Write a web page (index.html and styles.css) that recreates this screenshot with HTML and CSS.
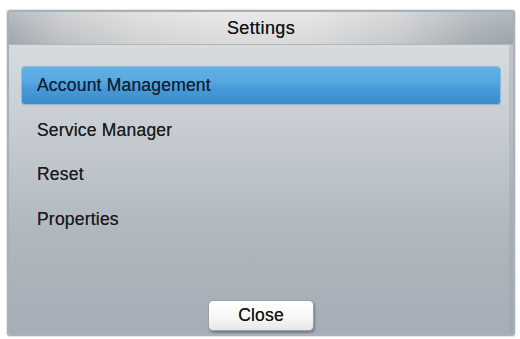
FILE: index.html
```html
<!DOCTYPE html>
<html>
<head>
<meta charset="utf-8">
<link rel="stylesheet" href="styles.css">
</head>
<body>
<div class="dialog">
  <div class="header">Settings</div>
  <div class="content">
    <ul class="menu">
      <li class="item selected">Account Management</li>
      <li class="item">Service Manager</li>
      <li class="item">Reset</li>
      <li class="item">Properties</li>
    </ul>
    <div class="footer">
      <button class="close-btn">Close</button>
    </div>
  </div>
</div>
</body>
</html>
```

FILE: styles.css
```css
html, body {
  margin: 0;
  padding: 0;
  background: #ffffff;
}
body {
  font-family: "Liberation Sans", Arial, sans-serif;
  width: 520px;
  height: 339px;
  overflow: hidden;
}
.dialog {
  margin: 10px 0 0 7px;
  width: 508px;
  height: 326px;
  box-sizing: border-box;
  border: 2px solid #a9b0b6;
  border-radius: 3px;
  box-shadow: 0 0 0 1px #e4e7e9;
  display: flex;
  flex-direction: column;
  overflow: hidden;
  background: linear-gradient(to bottom, #dde1e4 0%, #c7cdd2 35%, #afb6be 70%, #a5adb6 100%);
}
.header {
  height: 32px;
  flex: none;
  display: flex;
  align-items: center;
  justify-content: center;
  font-size: 18px;
  letter-spacing: 0.4px;
  color: #151515;
  text-shadow: 0 0 0.6px rgba(20,20,20,0.8);
  border-bottom: 1px solid #b3b8bc;
  background:
    linear-gradient(to bottom, rgba(255,255,255,0.15), rgba(0,0,0,0.05)),
    linear-gradient(to right, #a7afb6 0%, #c6c9cb 10%, #dcdcdc 25%, #e6e6e6 45%, #e3e3e3 60%, #cfd1d3 78%, #aeb5bb 92%, #a4acb3 100%);
}
.content {
  flex: 1;
  display: flex;
  flex-direction: column;
  padding: 22px 9px 3px 13px;
  border-right: 4px solid rgba(150,158,166,0.35);
}
.menu {
  list-style: none;
  margin: 0;
  padding: 0;
  display: flex;
  flex-direction: column;
  gap: 7.5px;
  flex: 1;
}
.item {
  height: 37px;
  display: flex;
  align-items: center;
  padding-left: 15px;
  font-size: 17.5px;
  letter-spacing: 0.2px;
  color: #1d1d1f;
  text-shadow: 0 0 0.6px rgba(20,20,20,0.8);
}
.item.selected {
  color: #12223a;
  border-radius: 3px;
  background: linear-gradient(to bottom, #63b1e3 0%, #55a8df 40%, #4799d6 60%, #3c8ccd 100%);
  box-shadow: 0 0 0 1px #92b9d5, 0 1px 1px rgba(40,70,100,0.35);
}
.footer {
  display: flex;
  justify-content: center;
}
.close-btn {
  width: 106px;
  height: 31px;
  border: 1px solid #9aa0a5;
  border-radius: 5px;
  background: linear-gradient(to bottom, #ffffff 0%, #f7f7f7 55%, #e6e7e8 100%);
  box-shadow: 1px 2px 2px rgba(50,55,60,0.4);
  font-family: "Liberation Sans", Arial, sans-serif;
  font-size: 17.5px;
  letter-spacing: 0.2px;
  color: #151515;
  text-shadow: 0 0 0.6px rgba(20,20,20,0.8);
  padding: 0;
}
```
